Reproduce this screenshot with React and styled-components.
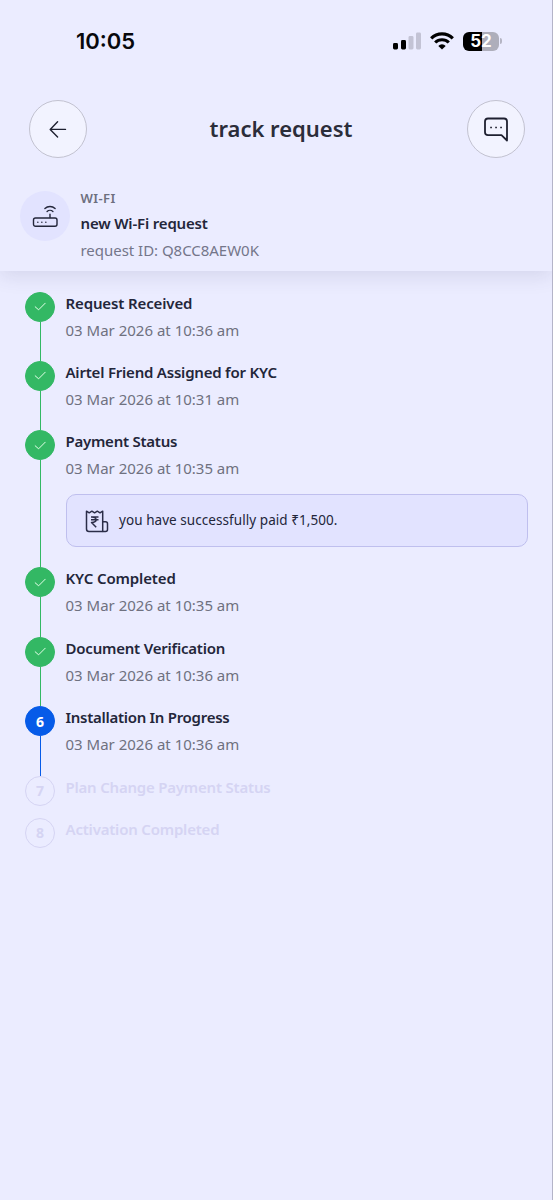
import React from "react"
import styled, { createGlobalStyle } from "styled-components"

const GlobalStyle = createGlobalStyle`
  * {
    box-sizing: border-box;
  }

  body {
    margin: 0;
    background: #ebecff;
    font-family: "Noto Sans", sans-serif;
  }
`

const Page = styled.div`
  width: 100%;
  min-height: 1200px;
  border-right: 1px solid #b4b4c8;
  background: #ebecff;
  color: #23263a;
`

const StatusBar = styled.div`
  height: 82px;
  padding: 0 50px 0 76px;
  display: flex;
  justify-content: space-between;
  align-items: center;
`

const Clock = styled.span`
  font: 600 22px/26px Inter, sans-serif;
  color: #08080c;
`

const Indicators = styled.div`
  display: flex;
  align-items: center;
`

const Battery = styled.div`
  width: 36px;
  height: 19px;
  margin-left: 9px;
  border-radius: 6px;
  background: linear-gradient(90deg, #000 52%, #aeaebb 52%);
  color: #fff;
  font: 700 17px/19px Inter, sans-serif;
  text-align: center;
`

const BatteryTip = styled.div`
  width: 2px;
  height: 6px;
  margin-left: 1px;
  border-radius: 0 2px 2px 0;
  background: #b5b5c4;
`

const WifiSvg = styled.svg`
  margin-left: 9px;
`

const Toolbar = styled.header`
  height: 94px;
  padding: 0 27px 0 29px;
  display: flex;
  justify-content: space-between;
  align-items: center;
`

const RoundButton = styled.button`
  width: 58px;
  height: 58px;
  padding: 0;
  border: 1px solid #c2c2d0;
  border-radius: 50%;
  background: #f2f3ff;
  display: flex;
  justify-content: center;
  align-items: center;
`

const Title = styled.h1`
  margin: 0;
  padding: 0 0 2px 8px;
  font-size: 22px;
  line-height: 30px;
  font-weight: 600;
  color: #2b2d3a;
`

const Text = styled.div`
  width: max-content;
  white-space: nowrap;
  font-size: ${({ $size }) => $size || 15}px;
  line-height: ${({ $line }) => $line || 27}px;
  font-weight: ${({ $bold }) => ($bold ? 600 : 400)};
  letter-spacing: ${({ $spacing }) => $spacing || 0}px;
  color: ${({ $color }) => $color || `#23263a`};
`

const Request = styled.section`
  height: 95px;
  padding: 9px 20px 0;
  display: flex;
  gap: 10.5px;
  box-shadow: 0 5px 18px rgba(60, 60, 110, 0.13);
  clip-path: inset(0 0 -40px 0);
`

const RequestIcon = styled.div`
  width: 50px;
  height: 50px;
  margin-top: 6px;
  border-radius: 50%;
  background: #e2e3ff;
  display: flex;
  justify-content: center;
  align-items: center;
`

const Steps = styled.main`
  padding: 20.5px 25px 0;
`

const Step = styled.div`
  min-height: ${({ $height }) => $height}px;
  display: flex;
  gap: 10.5px;
`

const Rail = styled.div`
  width: 30px;
  display: flex;
  flex-direction: column;
  align-items: center;
`

const markers = {
  done: { fill: `#33b864`, border: `#33b864`, text: `#fff` },
  active: { fill: `#065be8`, border: `#065be8`, text: `#fff` },
  pending: { fill: `transparent`, border: `#d5d4f3`, text: `#d5d4f3` },
}

const Marker = styled.div`
  width: 30px;
  height: 30px;
  flex: none;
  border: 1px solid ${({ $status }) => markers[$status].border};
  border-radius: 50%;
  background: ${({ $status }) => markers[$status].fill};
  color: ${({ $status }) => markers[$status].text};
  display: flex;
  justify-content: center;
  align-items: center;
  font-size: 14px;
  font-weight: 700;
`

const Line = styled.div`
  width: 1px;
  margin-left: 1px;
  flex: 1;
  background: ${({ $status }) => markers[$status].border};
`

const StepBody = styled.div`
  flex: 1;
  margin-top: -2px;
`

const Notice = styled.div`
  height: 53px;
  margin: 12px -0.5px 0 0;
  padding-left: 18.5px;
  border: 1px solid #bfbfee;
  border-radius: 10px;
  background: #e2e3ff;
  display: flex;
  align-items: center;
  gap: 10px;
`

const SignalIcon = () => (
  <svg width="28" height="18" viewBox="0 0 28 18">
    <rect x="0" y="11" width="5" height="6.5" rx="1.4" fill="#000" />
    <rect x="8" y="8" width="5" height="9.5" rx="1.4" fill="#000" />
    <rect x="15.5" y="4" width="5" height="13.5" rx="1.4" fill="#c3c3d5" />
    <rect x="23" y="0.5" width="5" height="17" rx="1.4" fill="#c3c3d5" />
  </svg>
)

const WifiIcon = () => (
  <WifiSvg width="24" height="18" viewBox="0 0 24 18" fill="none">
    <path d="M1.200 6.300a15.300 15.300 0 0 1 21.600 0" stroke="#000" strokeWidth="3.2" />
    <path d="M5.200 10.500a9.600 9.600 0 0 1 13.600 0" stroke="#000" strokeWidth="3.1" />
    <path d="M8.300 13.900a5.200 5.200 0 0 1 7.400 0L12 17.600Z" fill="#000" />
  </WifiSvg>
)

const BackIcon = () => (
  <svg width="18" height="18" viewBox="0 0 18 18" fill="none" stroke="#1e2030" strokeWidth="1.4" strokeLinecap="round" strokeLinejoin="round">
    <path d="M16.500 9.400H1.500M8.600 1.700 1.200 9.400l7.400 7.500" />
  </svg>
)

const ChatIcon = () => (
  <svg width="26" height="26" viewBox="0 0 26 26" fill="none" stroke="#1e2030" strokeWidth="1.8" strokeLinejoin="round">
    <path d="M5 2.500h16q3 0 3 3v19l-5.500-5.300H5q-3 0-3-3V5.500q0-3 3-3Z" />
    <path d="M7.200 11.500h1.700M12.200 11.500h1.700M17.200 11.500h1.700" strokeWidth="1.6" />
  </svg>
)

const RouterIcon = () => (
  <svg width="26" height="24" viewBox="0 0 26 24" fill="none" stroke="#23263a" strokeWidth="1.4" strokeLinecap="round">
    <rect x="1.500" y="14" width="23.500" height="8.300" rx="2" />
    <path d="M18 13.500v-3.200M12.900 4.500a7.500 7.500 0 0 1 10.200 0M15.100 7.500a4.200 4.200 0 0 1 5.800 0" />
    <path d="M5.800 18.200h.1M9.800 18.200h.1M13.800 18.200h.1" />
  </svg>
)

const CheckIcon = () => (
  <svg width="12" height="9" viewBox="0 0 12 9" fill="none" stroke="#e4ffe9" strokeWidth="1" strokeLinecap="round" strokeLinejoin="round">
    <path d="m1.200 4.800 3.400 3L11.200 1.200" />
  </svg>
)

const ReceiptIcon = () => (
  <svg width="24" height="24" viewBox="0 0 24 24" fill="none" stroke="#2b2d48" strokeWidth="1.5" strokeLinejoin="round">
    <path d="M17.700 22.500H4Q1.500 22.500 1.500 20V2.200l2.700 1.600 2.700-1.600 2.700 1.600 2.700-1.600 2.700 1.600 2.700-1.600Z" />
    <path d="M17.700 12.800h2.800q2 0 2 2v5.700q0 2-2 2h-2.800" />
    <path d="M6 8h7.500M6 10.800h7.500M6.500 8c6.300-.3 6.300 5.700 0 5.500L11.200 18.200" />
  </svg>
)

const steps = [
  { title: `Request Received`, spacing: -0.13, time: `03 Mar 2026 at 10:36 am`, status: `done`, height: 69.4 },
  { title: `Airtel Friend Assigned for KYC`, spacing: -0.21, time: `03 Mar 2026 at 10:31 am`, status: `done`, height: 69.4 },
  { title: `Payment Status`, spacing: -0.25, time: `03 Mar 2026 at 10:35 am`, status: `done`, height: 137.2, notice: `you have successfully paid ₹1,500.` },
  { title: `KYC Completed`, spacing: -0.12, time: `03 Mar 2026 at 10:35 am`, status: `done`, height: 69.4 },
  { title: `Document Verification`, spacing: -0.21, time: `03 Mar 2026 at 10:36 am`, status: `done`, height: 69.4 },
  { title: `Installation In Progress`, spacing: -0.28, time: `03 Mar 2026 at 10:36 am`, status: `active`, height: 69.4 },
  { title: `Plan Change Payment Status`, spacing: -0.21, status: `pending`, height: 42.3 },
  { title: `Activation Completed`, spacing: -0.2, status: `pending`, height: 42.3 },
]

const App = () => (
  <>
    <GlobalStyle />
    <Page>
      <StatusBar>
        <Clock>10:05</Clock>
        <Indicators>
          <SignalIcon />
          <WifiIcon />
          <Battery>52</Battery>
          <BatteryTip />
        </Indicators>
      </StatusBar>
      <Toolbar>
        <RoundButton aria-label="back">
          <BackIcon />
        </RoundButton>
        <Title>track request</Title>
        <RoundButton aria-label="chat">
          <ChatIcon />
        </RoundButton>
      </Toolbar>
      <Request>
        <RequestIcon>
          <RouterIcon />
        </RequestIcon>
        <div>
          <Text $bold $size={13} $line={26} $spacing={0.4} $color="#6d6f7e">WI-FI</Text>
          <Text $bold $line={25} $spacing={-0.17}>new Wi-Fi request</Text>
          <Text $line={29} $color="#74768a" $spacing={-0.03}>request ID: Q8CC8AEW0K</Text>
        </div>
      </Request>
      <Steps>
        {steps.map(({ title, spacing, time, status, height, notice }, index) => (
          <Step key={title} $height={height}>
            <Rail>
              <Marker $status={status}>
                {status === `done` ? <CheckIcon /> : index + 1}
              </Marker>
              {status !== `pending` && <Line $status={status} />}
            </Rail>
            <StepBody>
              <Text $bold $spacing={spacing} $color={status === `pending` ? `#d5d4f3` : `#23263a`}>
                {title}
              </Text>
              {time && <Text $color="#6f7180">{time}</Text>}
              {notice && (
                <Notice>
                  <ReceiptIcon />
                  <Text $size={13.5} $spacing={0.06}>{notice}</Text>
                </Notice>
              )}
            </StepBody>
          </Step>
        ))}
      </Steps>
    </Page>
  </>
)

export default App
